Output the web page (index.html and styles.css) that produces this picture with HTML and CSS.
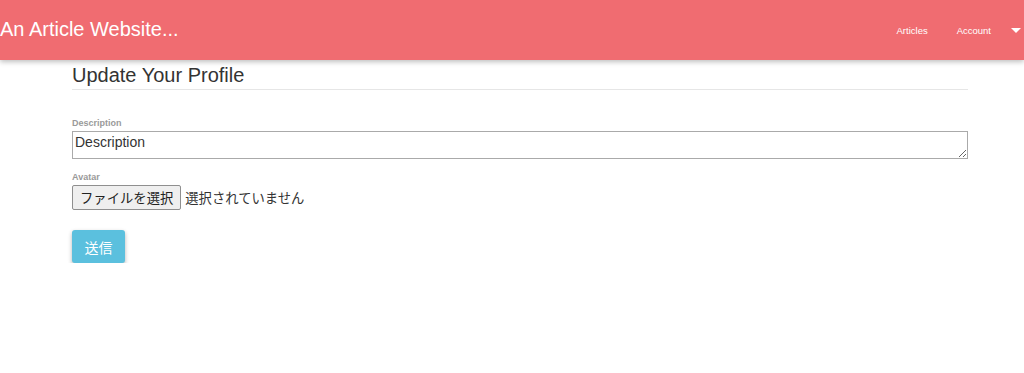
FILE: index.html
```html
<!DOCTYPE html>
<html lang="ja">
<head>
<meta charset="utf-8">
<title>Update Your Profile</title>
<link rel="stylesheet" href="styles.css">
</head>
<body>
<header class="navbar">
  <a class="brand" href="#">An Article Website...</a>
  <nav class="nav">
    <a class="nav-link" href="#">Articles</a>
    <a class="nav-link" href="#">Account</a>
    <span class="caret"></span>
  </nav>
</header>
<main class="container">
  <h1 class="page-title">Update Your Profile</h1>
  <form class="form">
    <div class="field">
      <label class="field-label">Description</label>
      <textarea class="textarea" rows="1">Description</textarea>
    </div>
    <div class="field">
      <label class="field-label">Avatar</label>
      <div class="file-row">
        <span class="file-button">ファイルを選択</span>
        <span class="file-status">選択されていません</span>
      </div>
    </div>
    <button type="button" class="submit">送信</button>
  </form>
</main>
</body>
</html>
```
FILE: styles.css
```css
* { box-sizing: border-box; }
body {
  margin: 0;
  font-family: "Liberation Sans", Arial, "Noto Sans CJK JP", sans-serif;
  color: #333;
  background: #fff;
}
.navbar {
  height: 60px;
  background: #f06c71;
  display: flex;
  align-items: center;
  justify-content: space-between;
  box-shadow: 0 2px 5px rgba(0,0,0,0.25);
}
.brand {
  color: #fff;
  text-decoration: none;
  font-size: 20px;
  margin-top: -2px;
}
.nav {
  display: flex;
  align-items: center;
}
.nav-link {
  color: #fff;
  text-decoration: none;
  font-size: 9.5px;
  margin-right: 29px;
}
.nav-link:nth-child(2) { margin-right: 20px; }
.caret {
  width: 0;
  height: 0;
  border-left: 5px solid transparent;
  border-right: 5px solid transparent;
  border-top: 5px solid #fff;
  margin-right: 3px;
}
.container {
  width: 896px;
  margin-left: 72px;
}
.page-title {
  font-size: 20px;
  font-weight: normal;
  margin: 4px 0 0;
  padding-bottom: 3px;
  border-bottom: 1px solid #e6e6e6;
  line-height: 22px;
}
.form { margin-top: 28px; }
.field { display: flex; flex-direction: column; }
.field-label {
  font-size: 9px;
  font-weight: bold;
  color: #9a9a9a;
  line-height: 11px;
  margin-bottom: 2px;
}
.textarea {
  width: 896px;
  height: 28px;
  border: 1px solid #aaa;
  font-family: "Liberation Sans", Arial, sans-serif;
  font-size: 14px;
  color: #333;
  padding: 2px 2px;
  margin: 0 0 13px;
  resize: vertical;
}
.file-row {
  display: flex;
  align-items: center;
  height: 25px;
}
.file-button {
  font-family: "Noto Sans CJK JP", sans-serif;
  font-size: 13.33px;
  color: #222;
  background: #efefef;
  border: 1px solid #8f8f8f;
  border-radius: 2px;
  height: 25px;
  line-height: 23px;
  padding: 0 7px;
}
.file-status {
  font-family: "Noto Sans CJK JP", sans-serif;
  font-size: 13.33px;
  color: #333;
  margin-left: 4px;
}
.submit {
  margin-top: 20px;
  background: #5bc0de;
  color: #fff;
  border: none;
  border-radius: 3px;
  width: 53px;
  height: 33px;
  font-family: "Noto Sans CJK JP", sans-serif;
  font-size: 14px;
  box-shadow: 0 2px 4px rgba(0,0,0,0.3);
}
```
